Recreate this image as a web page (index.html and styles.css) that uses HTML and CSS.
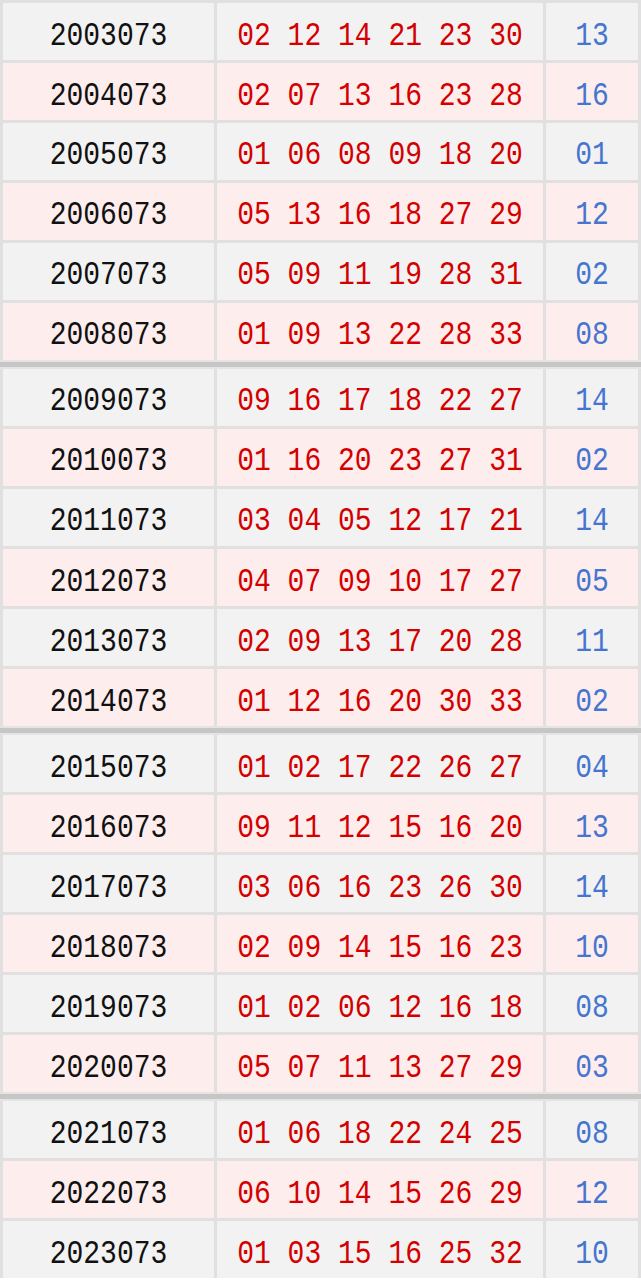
FILE: index.html
```html
<!DOCTYPE html>
<html lang="zh-CN">
<head>
    <meta charset="UTF-8">
    <meta name="viewport" content="width=device-width, initial-scale=1.0">
    <title>历年同期开奖</title>
    <link rel="stylesheet" href="styles.css">
</head>
<body>
    <div class="history">
        <div class="group">
            <div class="row odd"><div class="issue"><span>2003073</span></div><div class="reds"><span>02 12 14 21 23 30</span></div><div class="blue"><span>13</span></div></div>
            <div class="row even"><div class="issue"><span>2004073</span></div><div class="reds"><span>02 07 13 16 23 28</span></div><div class="blue"><span>16</span></div></div>
            <div class="row odd"><div class="issue"><span>2005073</span></div><div class="reds"><span>01 06 08 09 18 20</span></div><div class="blue"><span>01</span></div></div>
            <div class="row even"><div class="issue"><span>2006073</span></div><div class="reds"><span>05 13 16 18 27 29</span></div><div class="blue"><span>12</span></div></div>
            <div class="row odd"><div class="issue"><span>2007073</span></div><div class="reds"><span>05 09 11 19 28 31</span></div><div class="blue"><span>02</span></div></div>
            <div class="row even"><div class="issue"><span>2008073</span></div><div class="reds"><span>01 09 13 22 28 33</span></div><div class="blue"><span>08</span></div></div>
        </div>
        <div class="divider"></div>
        <div class="group">
            <div class="row odd"><div class="issue"><span>2009073</span></div><div class="reds"><span>09 16 17 18 22 27</span></div><div class="blue"><span>14</span></div></div>
            <div class="row even"><div class="issue"><span>2010073</span></div><div class="reds"><span>01 16 20 23 27 31</span></div><div class="blue"><span>02</span></div></div>
            <div class="row odd"><div class="issue"><span>2011073</span></div><div class="reds"><span>03 04 05 12 17 21</span></div><div class="blue"><span>14</span></div></div>
            <div class="row even"><div class="issue"><span>2012073</span></div><div class="reds"><span>04 07 09 10 17 27</span></div><div class="blue"><span>05</span></div></div>
            <div class="row odd"><div class="issue"><span>2013073</span></div><div class="reds"><span>02 09 13 17 20 28</span></div><div class="blue"><span>11</span></div></div>
            <div class="row even"><div class="issue"><span>2014073</span></div><div class="reds"><span>01 12 16 20 30 33</span></div><div class="blue"><span>02</span></div></div>
        </div>
        <div class="divider"></div>
        <div class="group">
            <div class="row odd"><div class="issue"><span>2015073</span></div><div class="reds"><span>01 02 17 22 26 27</span></div><div class="blue"><span>04</span></div></div>
            <div class="row even"><div class="issue"><span>2016073</span></div><div class="reds"><span>09 11 12 15 16 20</span></div><div class="blue"><span>13</span></div></div>
            <div class="row odd"><div class="issue"><span>2017073</span></div><div class="reds"><span>03 06 16 23 26 30</span></div><div class="blue"><span>14</span></div></div>
            <div class="row even"><div class="issue"><span>2018073</span></div><div class="reds"><span>02 09 14 15 16 23</span></div><div class="blue"><span>10</span></div></div>
            <div class="row odd"><div class="issue"><span>2019073</span></div><div class="reds"><span>01 02 06 12 16 18</span></div><div class="blue"><span>08</span></div></div>
            <div class="row even"><div class="issue"><span>2020073</span></div><div class="reds"><span>05 07 11 13 27 29</span></div><div class="blue"><span>03</span></div></div>
        </div>
        <div class="divider"></div>
        <div class="group">
            <div class="row odd"><div class="issue"><span>2021073</span></div><div class="reds"><span>01 06 18 22 24 25</span></div><div class="blue"><span>08</span></div></div>
            <div class="row even"><div class="issue"><span>2022073</span></div><div class="reds"><span>06 10 14 15 26 29</span></div><div class="blue"><span>12</span></div></div>
            <div class="row odd"><div class="issue"><span>2023073</span></div><div class="reds"><span>01 03 15 16 25 32</span></div><div class="blue"><span>10</span></div></div>
        </div>
    </div>
</body>
</html>
```

FILE: styles.css
```css
body {
    margin: 0;
    padding: 0;
    background: #fff;
    font-family: "Liberation Mono", "DejaVu Sans Mono", monospace;
}

.history {
    width: 641px;
    box-sizing: border-box;
    padding: 3px 3px 0 3px;
    background-color: #e0e0e0;
}

.group {
    display: flex;
    flex-direction: column;
    gap: 3px;
}

.divider {
    height: 9px;
    background: linear-gradient(#e4e4e4 0 2px, #c6c6c6 2px 7px, #e4e4e4 7px 9px);
    margin: 0 -3px;
}

.row {
    display: grid;
    grid-template-columns: 211px 326px 92px;
    column-gap: 3px;
    height: 57px;
}

.row > div {
    display: flex;
    align-items: center;
    justify-content: center;
    padding-top: 7px;
    font-size: 28px;
    white-space: pre;
}

.row span {
    display: inline-block;
    transform: scaleY(1.2);
}

.odd > div {
    background-color: #f2f2f2;
}

.even > div {
    background-color: #fdeded;
}

.issue {
    color: #111;
}

.reds {
    color: #d40000;
}

.blue {
    color: #4675d0;
}
```
